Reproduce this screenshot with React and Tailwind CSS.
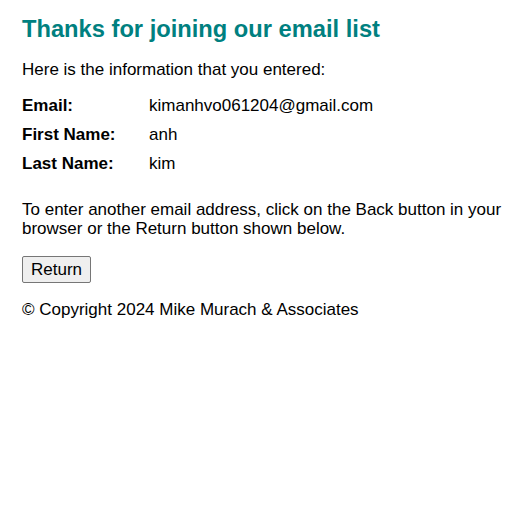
import React from 'react';

const rows = [
    { label: 'Email:', value: 'kimanhvo061204@gmail.com' },
    { label: 'First Name:', value: 'anh' },
    { label: 'Last Name:', value: 'kim' },
];

export default function App() {
    return (
        <div className="min-h-[519px] bg-white pl-[22px] pt-[15px] font-['Liberation_Sans',Arial,sans-serif] text-[17px] leading-[18px] text-black">
            <h1 className="text-[23.7px] font-bold leading-[28px] text-[#008080]">
                Thanks for joining our email list
            </h1>

            <p className="mt-[18px]">Here is the information that you entered:</p>

            <div className="mt-[18px] flex flex-col gap-[11px]">
                {rows.map(row => (
                    <div key={row.label} className="flex">
                        <span className="w-[127px] font-bold">{row.label}</span>
                        <span>{row.value}</span>
                    </div>
                ))}
            </div>

            <p className="mt-[27px] leading-[19px]">
                To enter another email address, click on the Back button in your
                <br />
                browser or the Return button shown below.
            </p>

            <button className="mt-[18px] h-[27px] rounded-[2px] border border-[#767676] bg-[#efefef] px-[8px] text-[17px] leading-[18px]">
                Return
            </button>

            <p className="mt-[18px]">© Copyright 2024 Mike Murach &amp; Associates</p>
        </div>
    );
}
